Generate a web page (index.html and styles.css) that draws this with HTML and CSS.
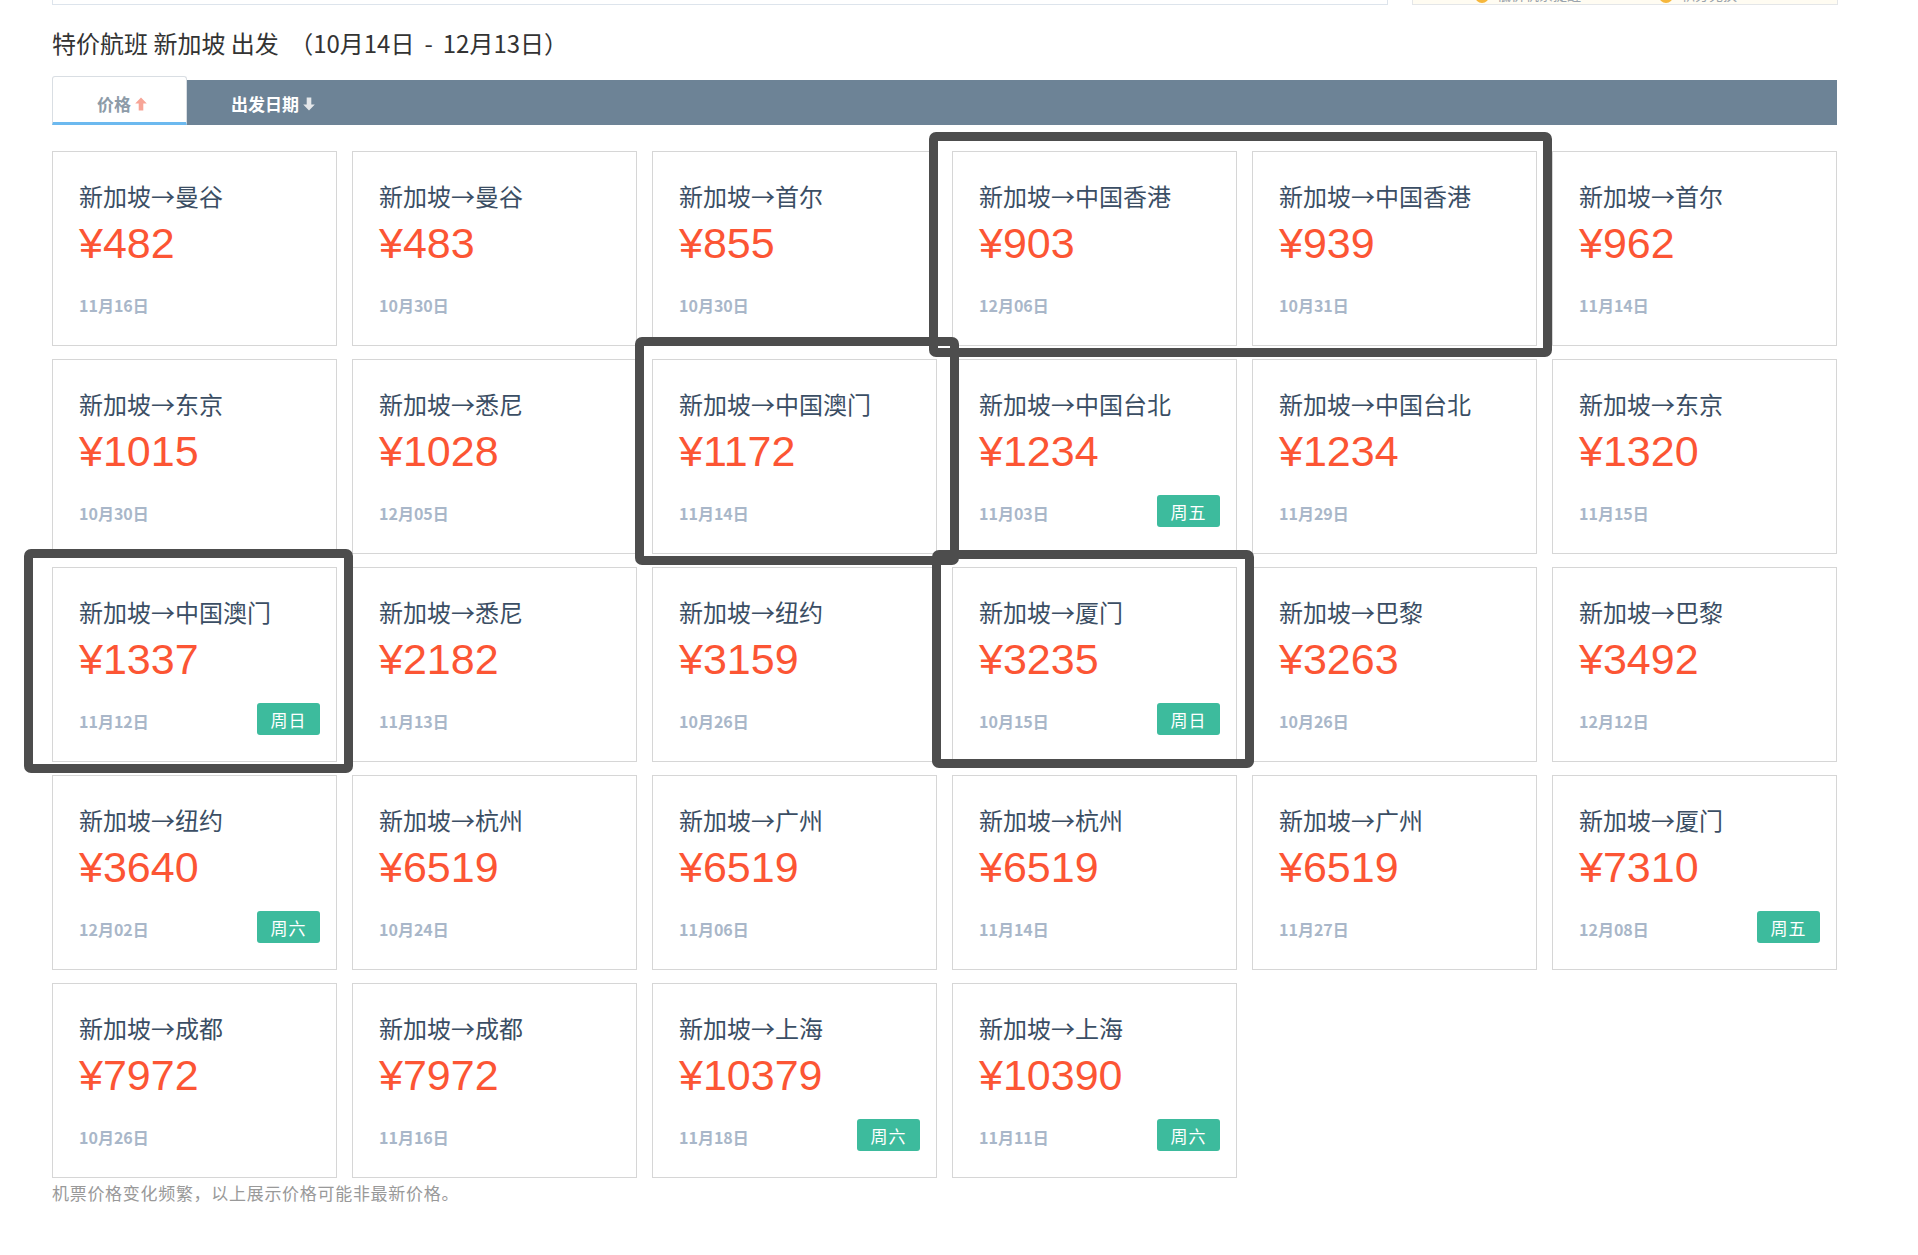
FILE: index.html
```html
<!DOCTYPE html>
<html lang="zh-CN">
<head>
<meta charset="utf-8">
<title>特价航班 新加坡 出发</title>
<link rel="stylesheet" href="styles.css">
</head>
<body>
<div class="page">
  <div class="topbar">
    <div class="top-left"></div>
    <div class="top-right">
      <span class="coin"></span><span class="top-text">低价机票提醒</span>
      <span class="coin coin-2"></span><span class="top-text">积分兑换</span>
    </div>
  </div>

  <h1 class="title">特价航班 新加坡 出发 <span class="range">（10月14日<span class="dash">-</span>12月13日）</span></h1>

  <div class="tabs">
    <div class="tab active">价格<svg class="arrow" width="12" height="14" viewBox="0 0 12 14"><path d="M6 0.5 L11.8 6.6 H8.3 V13.5 H3.7 V6.6 H0.2 Z" fill="#f7a597"/></svg></div>
    <div class="tab second">出发日期<svg class="arrow" width="12" height="14" viewBox="0 0 12 14"><path d="M6 13.5 L11.8 7.4 H8.3 V0.5 H3.7 V7.4 H0.2 Z" fill="#e4e7ea"/></svg></div>
  </div>

  <div class="grid">
    <div class="card"><div class="route">新加坡→曼谷</div><div class="price">¥482</div><div class="meta"><span class="date">11月16日</span></div></div>
    <div class="card"><div class="route">新加坡→曼谷</div><div class="price">¥483</div><div class="meta"><span class="date">10月30日</span></div></div>
    <div class="card"><div class="route">新加坡→首尔</div><div class="price">¥855</div><div class="meta"><span class="date">10月30日</span></div></div>
    <div class="card"><div class="route">新加坡→中国香港</div><div class="price">¥903</div><div class="meta"><span class="date">12月06日</span></div></div>
    <div class="card"><div class="route">新加坡→中国香港</div><div class="price">¥939</div><div class="meta"><span class="date">10月31日</span></div></div>
    <div class="card"><div class="route">新加坡→首尔</div><div class="price">¥962</div><div class="meta"><span class="date">11月14日</span></div></div>

    <div class="card"><div class="route">新加坡→东京</div><div class="price">¥1015</div><div class="meta"><span class="date">10月30日</span></div></div>
    <div class="card"><div class="route">新加坡→悉尼</div><div class="price">¥1028</div><div class="meta"><span class="date">12月05日</span></div></div>
    <div class="card"><div class="route">新加坡→中国澳门</div><div class="price">¥1172</div><div class="meta"><span class="date">11月14日</span></div></div>
    <div class="card"><div class="route">新加坡→中国台北</div><div class="price">¥1234</div><div class="meta"><span class="date">11月03日</span><span class="badge">周五</span></div></div>
    <div class="card"><div class="route">新加坡→中国台北</div><div class="price">¥1234</div><div class="meta"><span class="date">11月29日</span></div></div>
    <div class="card"><div class="route">新加坡→东京</div><div class="price">¥1320</div><div class="meta"><span class="date">11月15日</span></div></div>

    <div class="card"><div class="route">新加坡→中国澳门</div><div class="price">¥1337</div><div class="meta"><span class="date">11月12日</span><span class="badge">周日</span></div></div>
    <div class="card"><div class="route">新加坡→悉尼</div><div class="price">¥2182</div><div class="meta"><span class="date">11月13日</span></div></div>
    <div class="card"><div class="route">新加坡→纽约</div><div class="price">¥3159</div><div class="meta"><span class="date">10月26日</span></div></div>
    <div class="card"><div class="route">新加坡→厦门</div><div class="price">¥3235</div><div class="meta"><span class="date">10月15日</span><span class="badge">周日</span></div></div>
    <div class="card"><div class="route">新加坡→巴黎</div><div class="price">¥3263</div><div class="meta"><span class="date">10月26日</span></div></div>
    <div class="card"><div class="route">新加坡→巴黎</div><div class="price">¥3492</div><div class="meta"><span class="date">12月12日</span></div></div>

    <div class="card"><div class="route">新加坡→纽约</div><div class="price">¥3640</div><div class="meta"><span class="date">12月02日</span><span class="badge">周六</span></div></div>
    <div class="card"><div class="route">新加坡→杭州</div><div class="price">¥6519</div><div class="meta"><span class="date">10月24日</span></div></div>
    <div class="card"><div class="route">新加坡→广州</div><div class="price">¥6519</div><div class="meta"><span class="date">11月06日</span></div></div>
    <div class="card"><div class="route">新加坡→杭州</div><div class="price">¥6519</div><div class="meta"><span class="date">11月14日</span></div></div>
    <div class="card"><div class="route">新加坡→广州</div><div class="price">¥6519</div><div class="meta"><span class="date">11月27日</span></div></div>
    <div class="card"><div class="route">新加坡→厦门</div><div class="price">¥7310</div><div class="meta"><span class="date">12月08日</span><span class="badge">周五</span></div></div>

    <div class="card"><div class="route">新加坡→成都</div><div class="price">¥7972</div><div class="meta"><span class="date">10月26日</span></div></div>
    <div class="card"><div class="route">新加坡→成都</div><div class="price">¥7972</div><div class="meta"><span class="date">11月16日</span></div></div>
    <div class="card"><div class="route">新加坡→上海</div><div class="price">¥10379</div><div class="meta"><span class="date">11月18日</span><span class="badge">周六</span></div></div>
    <div class="card"><div class="route">新加坡→上海</div><div class="price">¥10390</div><div class="meta"><span class="date">11月11日</span><span class="badge">周六</span></div></div>
  </div>

  <p class="note">机票价格变化频繁，以上展示价格可能非最新价格。</p>
</div>

<div class="mark mark-1"></div>
<div class="mark mark-2"></div>
<div class="mark mark-3"></div>
<div class="mark mark-4"></div>
</body>
</html>
```

FILE: styles.css
```css
* {
  box-sizing: border-box;
}

html,
body {
  margin: 0;
  padding: 0;
  background: #ffffff;
}

body {
  position: relative;
  min-height: 1255px;
  font-family: "Noto Sans CJK SC", "Noto Sans", sans-serif;
  color: #333333;
}

.page {
  width: 1837px;
  padding-left: 52px;
}

/* cut-off boxes at the very top */
.topbar {
  display: flex;
  gap: 24px;
}

.top-left {
  flex: none;
  width: 1336px;
  height: 40px;
  margin-top: -35px;
  border: 1px solid #dde4ec;
  background: #ffffff;
}

.top-right {
  flex: none;
  width: 426px;
  height: 40px;
  margin-top: -35px;
  border: 1px solid #e4e6e8;
  background: #fffcf2;
  display: flex;
  align-items: flex-end;
  padding: 0 0 1px 62px;
  gap: 8px;
}

.coin {
  width: 14px;
  height: 14px;
  border-radius: 50%;
  background: #f6b73c;
}

.coin-2 {
  margin-left: 70px;
}

.top-text {
  font-size: 14px;
  line-height: 16px;
  color: #9aa3ad;
  margin-bottom: 1px;
}

/* title */
.title {
  margin: 22px 0 0;
  font-size: 24px;
  line-height: 32px;
  font-weight: 400;
  color: #333333;
}

.range {
  margin-left: 5px;
}

.dash {
  margin: 0 10px;
}

/* tabs */
.tabs {
  display: flex;
  width: 1785px;
  height: 49px;
  margin-top: 17px;
  background: linear-gradient(to bottom, transparent 4px, #6d8396 4px);
}

.tab {
  display: flex;
  align-items: center;
  gap: 4px;
  height: 49px;
  padding-top: 6px;
  font-size: 17px;
  font-weight: 700;
  color: #ffffff;
}

.tab.active {
  width: 135px;
  padding-left: 44px;
  padding-top: 8px;
  background: #ffffff;
  border: 1px solid #d9dee3;
  border-bottom: 3px solid #6cb9ef;
  border-radius: 3px 3px 0 0;
  color: #8d9ba8;
}

.tab.second {
  padding-left: 44px;
}

.arrow {
  display: block;
}

/* grid of cards */
.grid {
  display: grid;
  grid-template-columns: repeat(6, 285px);
  column-gap: 15px;
  row-gap: 13px;
  margin-top: 26px;
}

.card {
  height: 195px;
  border: 1px solid #d6d6d6;
  padding: 28px 16px 0 26px;
  display: flex;
  flex-direction: column;
  background: #ffffff;
}

.route {
  font-size: 24px;
  line-height: 32px;
  color: #3b4e64;
}

.price {
  margin-top: 6px;
  font-family: "Liberation Sans", Arial, sans-serif;
  font-size: 43px;
  line-height: 50px;
  color: #fc5534;
}

.meta {
  margin-top: 19px;
  height: 32px;
  display: flex;
  align-items: center;
  justify-content: space-between;
}

.date {
  padding-top: 4px;
  font-size: 16px;
  font-weight: 700;
  color: #a9b7c9;
}

.badge {
  width: 63px;
  height: 32px;
  border-radius: 3px;
  background: #3dbb9d;
  color: #ffffff;
  font-size: 17px;
  letter-spacing: 1px;
  display: flex;
  align-items: center;
  justify-content: center;
}

.note {
  margin: 2px 0 0;
  font-size: 17px;
  line-height: 26px;
  letter-spacing: 0.7px;
  color: #999999;
}

/* highlight boxes drawn over the page */
.mark {
  position: absolute;
  border: 9px solid #4d4d4d;
  border-radius: 7px;
  pointer-events: none;
}

.mark-1 {
  left: 929px;
  top: 132px;
  width: 623px;
  height: 225px;
}

.mark-2 {
  left: 635px;
  top: 337px;
  width: 324px;
  height: 228px;
}

.mark-3 {
  left: 24px;
  top: 549px;
  width: 329px;
  height: 224px;
}

.mark-4 {
  left: 932px;
  top: 550px;
  width: 322px;
  height: 218px;
}
```
